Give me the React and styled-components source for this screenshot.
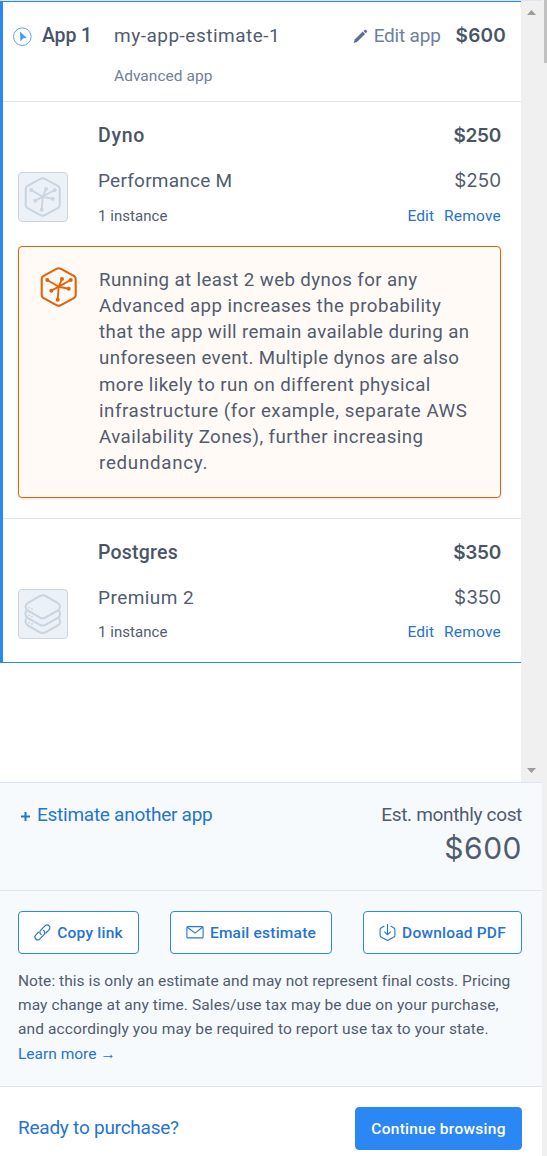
import React from 'react';
import styled, { createGlobalStyle } from 'styled-components';

const color = {
  text: '#525c6f',
  heading: '#4a5468',
  muted: '#70809a',
  link: '#2673d3',
  blue: '#2b87f3',
  line: '#dfe6ef',
  wash: '#f6fafd',
  orange: '#e36209',
  gutter: '#f0f0f0',
};

const GlobalStyle = createGlobalStyle`
  *, *::before, *::after { box-sizing: border-box; }
  body {
    margin: 0;
    background: #fff;
    color: ${color.text};
    font-family: Roboto, "Liberation Sans", sans-serif;
  }
`;

const Page = styled.div`
  display: flex;
  width: 547px;
  height: 1156px;
  overflow: hidden;
`;

const Panel = styled.main`
  flex: 1;
  display: flex;
  flex-direction: column;
`;

const PageGutter = styled.div`
  width: 5px;
  padding-left: 2px;
  background: ${color.gutter};
`;

const PageThumb = styled.div`
  height: 63px;
  background: #c1c1c1;
`;

const ScrollArea = styled.div`
  display: flex;
  height: 783px;
  border-top: 1px solid ${color.line};
  border-bottom: 1px solid ${color.line};
`;

const AppList = styled.div`
  flex: 1;
`;

const ScrollTrack = styled.div`
  width: 21px;
  padding: 9px 5px 8px 6px;
  display: flex;
  flex-direction: column;
  justify-content: space-between;
  background: ${color.gutter};
`;

const AppCard = styled.article`
  height: 662px;
  border: solid ${color.blue};
  border-width: 1px 0 1px 3px;
`;

const AppHeader = styled.header`
  display: flex;
  align-items: flex-start;
  height: 100px;
  padding: 20px 15px 0 9px;
  border-bottom: 1px solid ${color.line};
  background: linear-gradient(#f9fafb, #fff 4px);
`;

const AppLabel = styled.div`
  display: flex;
  align-items: center;
  gap: 9px;
  width: 102px;
`;

const AppName = styled.div`
  flex: 1;
  display: flex;
  flex-direction: column;
  gap: 14px;
`;

const EditApp = styled.a`
  display: flex;
  align-items: center;
  gap: 6px;
  margin-right: 15px;
`;

const Text = styled.span`
  display: block;
  white-space: nowrap;
  font-size: ${p => p.$size || 19}px;
  line-height: ${p => p.$lh || 26}px;
  letter-spacing: ${p => p.$ls || 0}px;
  color: ${p => p.$color || 'inherit'};
`;

const Heading = styled(Text).attrs({ as: 'h2' })`
  margin: 0;
  font-size: 19.5px;
  line-height: 28px;
  font-weight: 500;
  color: ${color.heading};
`;

const Price = styled(Text)`
  font-family: Inter, "Liberation Sans", sans-serif;
  font-weight: ${p => (p.$bold ? 600 : 400)};
  color: ${p => (p.$bold ? color.heading : 'inherit')};
`;

const Addon = styled.section`
  padding: 20px 20px 0 15px;
  height: ${p => p.$height}px;
  border-bottom: ${p => (p.$last ? 'none' : `1px solid ${color.line}`)};
`;

const AddonBody = styled.div`
  display: grid;
  grid-template-columns: 80px 1fr auto;
`;

const IconCell = styled.div`
  grid-row: 2 / 4;
  padding-top: 22px;
`;

const IconTile = styled.div`
  width: 50px;
  height: 50px;
  padding: 4px;
  border: 1px solid #cbd5e1;
  border-radius: 4px;
  background: #ebf1f6;
  color: #cbd5e1;
`;

const Cell = styled.div`
  display: flex;
  gap: 10px;
  grid-column: ${p => p.$col};
  justify-content: ${p => (p.$col === 3 ? 'flex-end' : 'flex-start')};
  padding-top: ${p => p.$top || 0}px;
`;

const Alert = styled.aside`
  display: flex;
  gap: 20px;
  height: 252px;
  margin-top: 18px;
  padding: 20px;
  border: 1px solid ${color.orange};
  border-radius: 4px;
  background: #fffaf6;
  box-shadow: 0 1px 3px rgba(60, 70, 90, 0.16);
  color: ${color.orange};
`;

const Paragraph = styled.p`
  margin: 0;
  color: ${color.text};
`;

const Totals = styled.section`
  display: flex;
  justify-content: space-between;
  height: 108px;
  padding: 18px 20px 0 20px;
  border-bottom: 1px solid ${color.line};
  background: ${color.wash};
`;

const AddApp = styled.a`
  display: flex;
  align-items: center;
  gap: 6px;
  height: 28px;
  color: ${color.link};
`;

const TotalCost = styled.div`
  display: flex;
  flex-direction: column;
  align-items: flex-end;
`;

const Actions = styled.section`
  height: 196px;
  padding: 20px 20px 0 18px;
  border-bottom: 1px solid ${color.line};
  background: ${color.wash};
`;

const ButtonRow = styled.div`
  display: flex;
  justify-content: space-between;
  margin-bottom: 15px;
`;

const Button = styled.button`
  display: flex;
  align-items: center;
  justify-content: center;
  gap: 6px;
  width: ${p => p.$width}px;
  height: 43px;
  padding: 0;
  border: 1px solid ${color.blue};
  border-radius: 4px;
  background: ${p => (p.$primary ? color.blue : '#fff')};
  color: ${p => (p.$primary ? '#fff' : color.link)};
  font-family: inherit;
  font-weight: 500;
`;

const Purchase = styled.footer`
  flex: 1;
  display: flex;
  justify-content: space-between;
  align-items: flex-start;
  padding: 20px 20px 0 18px;
`;

const DynoIcon = () => (
  <svg width="40" height="40" viewBox="0 0 40 40" fill="none" stroke="currentColor" strokeWidth="2.1" style={{ display: 'block' }}>
    <path d="M17.9 1.7Q19.7 .8 21.5 1.7L35.2 9.2Q36.7 10.2 36.7 12V28Q36.7 29.8 35.2 30.8L21.5 38.3Q19.7 39.2 17.9 38.3L4.2 30.8Q2.7 29.8 2.7 28V12Q2.7 10.2 4.2 9.2Z" />
    <path strokeWidth="1.9" d="M8.3 13L19.7 19.7L31.7 13M23 12L19.7 19.7L18.7 32.7M12.3 23.7L19.7 19.7L29.7 21.7" />
    <g fill="currentColor" stroke="none">
      <circle cx="8.3" cy="13" r="2" /><circle cx="23" cy="12" r="2" /><circle cx="31.7" cy="13" r="2" />
      <circle cx="29.7" cy="21.7" r="2" /><circle cx="12.3" cy="23.7" r="2" /><circle cx="18.7" cy="32.7" r="2" />
    </g>
  </svg>
);

const PostgresIcon = () => (
  <svg width="40" height="40" viewBox="0 0 40 40" fill="none" stroke="currentColor" strokeWidth="2.1" style={{ display: 'block' }}>
    <path d="M16.9 2a6 6 0 0 1 5.6 0L34.5 8.8Q37 10.3 37 12.8Q37 15.2 34.5 16.7L22.5 23.5a6 6 0 0 1-5.6 0L5 16.7Q2.5 15.2 2.5 12.8Q2.5 10.3 5 8.8Z" />
    <path d="M3.9 16.2Q2.3 17.8 2.5 20.3Q2.7 22.8 5 24L16.9 30.8a6 6 0 0 0 5.6 0L34.5 24Q37 22.8 37 20.3Q37 17.8 35.5 16.2" />
    <path d="M3.9 23.7Q2.3 25.3 2.5 27.7Q2.7 30.2 5 31.5L16.9 38.3a6 6 0 0 0 5.6 0L34.5 31.5Q37 30.2 37 27.7Q37 25.3 35.5 23.7" />
    <g fill="currentColor" stroke="none">
      <circle cx="6" cy="13.6" r=".9" /><circle cx="9" cy="15" r=".9" />
      <circle cx="6" cy="21.3" r=".9" /><circle cx="9" cy="22.6" r=".9" />
      <circle cx="6" cy="28.7" r=".9" /><circle cx="9" cy="30" r=".9" />
    </g>
  </svg>
);

const CursorIcon = () => (
  <svg width="21" height="20" viewBox="0 0 21 20">
    <circle cx="10.3" cy="10.7" r="8.8" fill="none" stroke="#5aa3f7" strokeWidth="1" />
    <path d="M8 5.6L14.8 12L11.2 12.3L8.4 15.6Z" fill="#4a98f6" />
  </svg>
);

const PencilIcon = () => (
  <svg width="15" height="15" viewBox="0 0 15 15" fill="#5c7090">
    <path d="M.7 15L1.7 11.6L9.8 3.6L12.1 5.9L4 13.9Z" />
    <path d="M10.5 2.9L11.5 1.9Q12.2 1.3 12.9 1.9L13.7 2.7Q14.4 3.5 13.8 4.2L12.8 5.2Z" />
  </svg>
);

const PlusIcon = () => (
  <svg width="11" height="11" viewBox="0 0 11 11" style={{ marginTop: 3 }}>
    <path d="M5.5 1V10M1 5.5H10" stroke={color.link} strokeWidth="2" />
  </svg>
);

const LinkIcon = () => (
  <svg width="17" height="17" viewBox="0 0 17 17" fill="none" stroke="currentColor" strokeWidth="1.2" strokeLinecap="round">
    <path d="M7.2 10.6C5.5 9.6 5.5 7.4 6.8 6.1L11 1.9C12.2 .7 14 .7 15.1 1.8C16.2 2.9 16.2 4.7 15 5.9L11.9 9" />
    <path d="M9.3 6.3C11.1 7.2 11.2 9.5 9.9 10.8L5.9 14.9C4.7 16.1 2.9 16.1 1.8 15C.7 13.9 .7 12.1 1.9 10.9L4.6 8.1" />
  </svg>
);

const MailIcon = () => (
  <svg width="18" height="13" viewBox="0 0 18 13" fill="none" stroke="currentColor" strokeWidth="1.1">
    <rect x=".9" y=".6" width="16.2" height="11.3" rx="1" />
    <path d="M1.4 1.2L9 7.1L16.6 1.2" />
  </svg>
);

const DownloadIcon = () => (
  <svg width="17" height="18" viewBox="0 0 17 18" fill="none" stroke="currentColor" strokeWidth="1.1">
    <path d="M5.4 2.1L2 4Q1.1 4.5 1.1 5.5V11.4Q1.1 12.4 2 12.9L7.6 16.1Q8.5 16.6 9.4 16.1L15 12.9Q15.9 12.4 15.9 11.4V5.5Q15.9 4.5 15 4L11.6 2.1" />
    <path d="M8.5 0V10.6M5.3 7.6L8.5 10.7L11.7 7.6" />
  </svg>
);

const ScrollArrow = ({ down }) => (
  <svg width="10" height="6" viewBox="0 0 10 6">
    <path d={down ? 'M0 0H9L4.5 5Z' : 'M0 5H9L4.5 0Z'} fill="#9d9d9d" />
  </svg>
);

const advice = [
  ['Running at least 2 web dynos for any', 0.38],
  ['Advanced app increases the probability', 0.44],
  ['that the app will remain available during an', 0.37],
  ['unforeseen event. Multiple dynos are also', 0.38],
  ['more likely to run on different physical', 0.4],
  ['infrastructure (for example, separate AWS', 0.53],
  ['Availability Zones), further increasing', 0.45],
  ['redundancy.', 0.75],
];

const note = [
  ['Note: this is only an estimate and may not represent final costs. Pricing', 0.05],
  ['may change at any time. Sales/use tax may be due on your purchase,', 0.1],
  ['and accordingly you may be required to report use tax to your state.', 0.12],
];

function AddonSection({ title, titleLs, plan, planLs, cost, icon, height, last, children }) {
  return (
    <Addon $height={height} $last={last}>
      <AddonBody>
        <Cell $col={2}><Heading $ls={titleLs}>{title}</Heading></Cell>
        <Cell $col={3}><Price $bold $size={19} $lh={28} $ls={-0.3}>{cost}</Price></Cell>
        <IconCell><IconTile>{icon}</IconTile></IconCell>
        <Cell $col={2} $top={17}><Text $lh={28} $ls={planLs}>{plan}</Text></Cell>
        <Cell $col={3} $top={17}><Price $size={18.8} $lh={27} $ls={0}>{cost}</Price></Cell>
        <Cell $col={2} $top={last ? 8 : 9}><Text $size={15} $lh={24} $ls={0.05}>1 instance</Text></Cell>
        <Cell $col={3} $top={last ? 8 : 9}>
          <Text as="a" $size={15.5} $lh={24} $ls={0.1} $color={color.link}>Edit</Text>
          <Text as="a" $size={15.5} $lh={24} $ls={0.2} $color={color.link}>Remove</Text>
        </Cell>
      </AddonBody>
      {children}
    </Addon>
  );
}

export default function App() {
  return (
    <>
      <GlobalStyle />
      <Page>
        <Panel>
          <ScrollArea>
            <AppList>
              <AppCard>
                <AppHeader>
                  <AppLabel>
                    <CursorIcon />
                    <Heading $ls={-0.15}>App 1</Heading>
                  </AppLabel>
                  <AppName>
                    <Text $lh={27} $ls={0.5}>my-app-estimate-1</Text>
                    <Text $size={15.5} $ls={0.04} $color={color.muted}>Advanced app</Text>
                  </AppName>
                  <EditApp>
                    <PencilIcon />
                    <Text $lh={27} $ls={-0.2} $color={color.muted}>Edit app</Text>
                  </EditApp>
                  <Price $bold $size={19} $lh={28} $ls={0.2}>$600</Price>
                </AppHeader>

                <AddonSection title="Dyno" titleLs={0.74} plan="Performance M" planLs={0.24} cost="$250" icon={<DynoIcon />} height={417}>
                  <Alert>
                    <DynoIcon />
                    <Paragraph>
                      {advice.map(([line, ls]) => (
                        <Text key={line} $size={18.7} $lh={26.15} $ls={ls}>{line}</Text>
                      ))}
                    </Paragraph>
                  </Alert>
                </AddonSection>

                <AddonSection title="Postgres" titleLs={0.23} plan="Premium 2" planLs={0.44} cost="$350" icon={<PostgresIcon />} height={143} last />
              </AppCard>
            </AppList>
            <ScrollTrack>
              <ScrollArrow />
              <ScrollArrow down />
            </ScrollTrack>
          </ScrollArea>

          <Totals>
            <AddApp>
              <PlusIcon />
              <Text $lh={28} $ls={-0.26}>Estimate another app</Text>
            </AddApp>
            <TotalCost>
              <Text $lh={28} $ls={-0.33}>Est. monthly cost</Text>
              <Price $size={30} $lh={38} $ls={0.5}>$600</Price>
            </TotalCost>
          </Totals>

          <Actions>
            <ButtonRow>
              <Button $width={121}><LinkIcon /><Text $size={15.5} $ls={0.22}>Copy link</Text></Button>
              <Button $width={162}><MailIcon /><Text $size={15.5} $ls={0.22}>Email estimate</Text></Button>
              <Button $width={159}><DownloadIcon /><Text $size={15.5} $ls={0.21}>Download PDF</Text></Button>
            </ButtonRow>
            <Paragraph>
              {note.map(([line, ls]) => (
                <Text key={line} $size={15.5} $lh={24.2} $ls={ls}>{line}</Text>
              ))}
            </Paragraph>
            <Text as="a" $size={15.5} $lh={24.3} $ls={0} $color={color.link}>Learn more →</Text>
          </Actions>

          <Purchase>
            <Text $lh={41} $ls={-0.24} $color={color.link}>Ready to purchase?</Text>
            <Button $primary $width={167}><Text $size={15.5} $ls={0.28}>Continue browsing</Text></Button>
          </Purchase>
        </Panel>
        <PageGutter><PageThumb /></PageGutter>
      </Page>
    </>
  );
}
